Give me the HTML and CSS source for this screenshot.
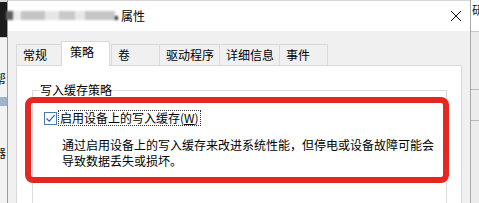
FILE: index.html
```html
<!DOCTYPE html>
<html lang="zh-CN">
<head>
<meta charset="utf-8">
<title>属性</title>
<link rel="stylesheet" href="styles.css">
</head>
<body>
<div class="screen">
  <div class="bg-left">
    <div class="bg-left-top"></div>
    <div class="bg-left-body">
      <span class="frag frag-a">帮</span>
      <span class="bg-sel"></span>
      <span class="frag frag-b">器</span>
    </div>
  </div>
  <div class="dialog">
    <div class="titlebar">
      <div class="blurred">
        <span class="blk b1"></span><span class="blk b2"></span><span class="blk b3"></span><span class="blk b4"></span><span class="blk b5"></span><span class="blk b6"></span><span class="blk b7"></span><span class="blk b8"></span>
      </div>
      <span class="title">属性</span>
      <svg class="close" width="12" height="12" viewBox="0 0 12 12"><path d="M1 1L11 11M11 1L1 11" stroke="#111" stroke-width="1" fill="none"/></svg>
    </div>
    <div class="body">
      <div class="tabs">
        <div class="tab">常规</div>
        <div class="tab active">策略</div>
        <div class="tab">卷</div>
        <div class="tab">驱动程序</div>
        <div class="tab">详细信息</div>
        <div class="tab">事件</div>
      </div>
      <div class="panel">
        <fieldset class="group">
          <legend class="legend">写入缓存策略</legend>
          <div class="check-row">
            <span class="cb"><svg width="11" height="11" viewBox="0 0 11 11"><path d="M1.5 5.5L4.2 8.2L9.6 2.2" stroke="#2b62a8" stroke-width="1.2" fill="none"/></svg></span>
            <span class="cb-label">启用设备上的写入缓存(<u>W</u>)</span>
          </div>
          <p class="desc">通过启用设备上的写入缓存来改进系统性能，但停电或设备故障可能会<br>导致数据丢失或损坏。</p>
        </fieldset>
        <div class="highlight"></div>
      </div>
    </div>
  </div>
  <div class="bg-right">
    <div class="bg-right-top"><span class="frag frag-c">研</span></div>
    <div class="bg-right-body">
      <span class="rline l1"></span>
      <span class="rline l2"></span>
    </div>
  </div>
</div>
</body>
</html>
```
FILE: styles.css
```css
* { box-sizing: border-box; }
html, body { margin: 0; padding: 0; }
body {
  font-family: "Noto Sans CJK SC", "Microsoft YaHei", sans-serif;
  font-size: 12px;
  color: #000;
  background: #f0f0f0;
}
.screen {
  width: 479px;
  height: 203px;
  overflow: hidden;
  display: flex;
}

/* background app, left */
.bg-left {
  width: 7px;
  flex: none;
  display: flex;
  flex-direction: column;
  overflow: hidden;
}
.bg-left-top {
  height: 37px;
  background: #1b1b1b;
  border-top: 2px solid #d8d8d8;
}
.bg-left-body {
  flex: 1;
  background: #f3f3f3;
  border-top: 1px solid #cfcfcf;
  display: flex;
  flex-direction: column;
  overflow: hidden;
}
.frag {
  display: block;
  font-size: 12px;
  line-height: 14px;
  color: #111;
  white-space: nowrap;
}
.frag-a { margin: 34px 0 0 -6px; }
.bg-sel {
  display: block;
  height: 9px;
  margin-top: 11px;
  background: #9fb4c8;
}
.frag-b { margin: 40px 0 0 -6px; }

/* dialog */
.dialog {
  width: 464px;
  flex: none;
  border-left: 1px solid #9c9c9c;
  border-right: 1px solid #a8a8a8;
  background: #f0f0f0;
  display: flex;
  flex-direction: column;
}
.titlebar {
  height: 31px;
  flex: none;
  background: #fff;
  border-top: 1px solid #d6d6d6;
  display: flex;
  align-items: center;
  padding-bottom: 1px;
}
.blurred {
  flex: none;
  display: flex;
  align-items: center;
  height: 10px;
  width: 112px;
  margin-left: -2px;
  filter: blur(1px);
}
.blk { display: block; flex: none; height: 9px; }
.b1 { width: 7px; background: #5e5e5e; }
.b2 { width: 8px; background: #ececec; }
.b3 { width: 24px; background: #c4c4c4; }
.b4 { width: 14px; background: #e6e6e6; }
.b5 { width: 16px; background: #c9c9c9; }
.b6 { width: 10px; background: #e8e8e8; }
.b7 { width: 30px; background: #c6c6c6; }
.b8 { width: 3px; height: 4px; margin-top: 4px; background: #333; }
.title {
  flex: none;
  margin-left: 3px;
  line-height: 16px;
}
.close {
  flex: none;
  margin-left: auto;
  margin-right: 8px;
}

.body {
  flex: 1;
  padding: 10px 8px 0;
  display: flex;
  flex-direction: column;
}
.tabs {
  height: 24px;
  display: flex;
  align-items: flex-end;
  position: relative;
  z-index: 1;
}
.tab {
  height: 21px;
  min-width: 49px;
  padding: 0 5px 0 6px;
  border: 1px solid #d9d9d9;
  border-bottom: none;
  margin-right: -1px;
  background: #f0f0f0;
  line-height: 19px;
  white-space: nowrap;
}
.tab.active {
  height: 25px;
  margin: 0 1px -1px -3px;
  padding: 0 7px 0 8px;
  background: #fff;
  line-height: 20px;
  position: relative;
  z-index: 2;
}

.panel {
  flex: 1;
  background: #fff;
  border: 1px solid #d9d9d9;
  position: relative;
  padding: 16px 14px 0 15px;
}
.group {
  margin: 0;
  height: 140px;
  border: 1px solid #dcdcdc;
  padding: 12px 6px 0 6px;
}
.legend {
  padding: 0 1px;
  line-height: 16px;
}
.check-row {
  display: flex;
  align-items: center;
  height: 16px;
  margin-left: 5px;
}
.cb {
  width: 13px;
  height: 13px;
  border: 1px solid #4b7bb3;
  background: #fff;
  display: flex;
  align-items: center;
  justify-content: center;
}
.cb-label {
  margin-left: 1px;
  padding: 0 1px;
  line-height: 14px;
  border: 1px dotted #333;
}
.cb-label u { text-decoration-thickness: 1px; text-underline-offset: 1px; }
.desc {
  margin: 11px 0 0 23px;
  line-height: 16px;
}
.highlight {
  position: absolute;
  left: 8px;
  top: 31px;
  width: 424px;
  height: 86px;
  border: 6px solid #e62620;
  border-radius: 8px;
}

/* background app, right */
.bg-right {
  width: 8px;
  flex: none;
  display: flex;
  flex-direction: column;
  overflow: hidden;
}
.bg-right-top {
  height: 31px;
  background: #fff;
  overflow: hidden;
}
.frag-c { margin: 3px 0 0 1px; }
.bg-right-body {
  flex: 1;
  background: #ececec;
  border-top: 1px solid #c9c9c9;
  display: flex;
  flex-direction: column;
}
.rline { display: block; height: 1px; background: #b9b9b9; }
.l1 { margin-top: 57px; }
.l2 { margin-top: 30px; }
```
